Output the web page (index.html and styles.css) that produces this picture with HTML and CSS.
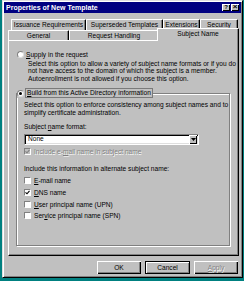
FILE: index.html
```html
<!DOCTYPE html>
<html>
<head>
<meta charset="utf-8">
<link rel="stylesheet" href="styles.css">
</head>
<body>
<div class="window">
  <div class="caption">
    <span class="caption-text">Properties of New Template</span>
    <span class="capbtns">
      <span class="capbtn">?</span>
      <span class="capbtn cx">×</span>
    </span>
  </div>
  <div class="tabs">
    <div class="tabrow back">
      <div class="tab w-iss">Issuance Requirements</div>
      <div class="tab w-sup">Superseded Templates</div>
      <div class="tab w-ext">Extensions</div>
      <div class="tab w-sec">Security</div>
    </div>
    <div class="tabrow front">
      <div class="tab w-gen">General</div>
      <div class="tab w-req">Request Handling</div>
      <div class="tab sel">Subject Name</div>
    </div>
  </div>
  <div class="panel">
    <div class="opt">
      <span class="radio"></span>
      <span class="lbl"><u>S</u>upply in the request</span>
    </div>
    <div class="desc">Select this option to allow a variety of subject name formats or if you do<br>not have access to the domain of which the subject is a member.<br>Autoenrollment is not allowed if you choose this option.</div>
    <div class="group">
      <div class="gtitle">
        <span class="radio"><span class="dot"></span></span>
        <span class="lbl focus"><u>B</u>uild from this Active Directory information</span>
      </div>
      <div class="gtext">Select this option to enforce consistency among subject names and to<br>simplify certificate administration.</div>
      <div class="flabel">Subject <u>n</u>ame format:</div>
      <div class="select">
        <span class="sval">None</span>
        <span class="dd"><svg width="5" height="3" viewBox="0 0 5 3"><path d="M0 0H5L2.5 3Z" fill="#000"/></svg></span>
      </div>
      <div class="chk dis">
        <span class="box"><svg width="5" height="5" viewBox="0 0 5 5"><path d="M0.5 2.3L2 3.8L4.5 0.8" fill="none" stroke="#808080" stroke-width="1.1"/></svg></span>
        <span class="lbl">Include e-<u>m</u>ail name in subject name</span>
      </div>
      <div class="flabel alt">Include this information in alternate subject name:</div>
      <div class="list">
        <div class="chk"><span class="box"></span><span class="lbl"><u>E</u>-mail name</span></div>
        <div class="chk"><span class="box"><svg width="5" height="5" viewBox="0 0 5 5"><path d="M0.5 2.3L2 3.8L4.5 0.8" fill="none" stroke="#000" stroke-width="1.1"/></svg></span><span class="lbl"><u>D</u>NS name</span></div>
        <div class="chk"><span class="box"></span><span class="lbl"><u>U</u>ser principal name (UPN)</span></div>
        <div class="chk"><span class="box"></span><span class="lbl">Ser<u>v</u>ice principal name (SPN)</span></div>
      </div>
    </div>
  </div>
  <div class="buttons">
    <div class="btn w-ok">OK</div>
    <div class="btn w-cancel def">Cancel</div>
    <div class="btn w-apply dis"><span><u>A</u>pply</span></div>
  </div>
</div>
</body>
</html>
```

FILE: styles.css
```css
* { box-sizing: border-box; }
html, body { margin: 0; padding: 0; }
body {
  background: #008080;
  width: 244px;
  height: 281px;
  overflow: hidden;
  font-family: "Liberation Sans", Arial, sans-serif;
  font-size: 6.6px;
  color: #000;
}
u { text-decoration: underline; text-underline-offset: 0.8px; text-decoration-thickness: 0.6px; }
.window {
  margin-left: 2px;
  width: 241px;
  height: 278px;
  background: #c0c0c0;
  border: 1px solid;
  border-color: #dfdfdf #000 #000 #dfdfdf;
  box-shadow: inset 1px 1px #fff, inset -1px -1px #808080;
  padding: 1px;
}
.caption {
  height: 11px;
  background: #000080;
  display: flex;
  align-items: center;
  justify-content: space-between;
  padding: 0 2px 0 2px;
}
.caption-text {
  color: #fff;
  font-weight: bold;
  font-size: 7px;
}
.capbtns { display: flex; gap: 1px; }
.capbtn {
  width: 8px;
  height: 7px;
  background: #c0c0c0;
  box-shadow: inset 1px 1px #fff, inset -1px -1px #000;
  font-size: 6px;
  font-weight: bold;
  line-height: 7px;
  text-align: center;
}
.capbtn.cx { font-size: 8px; line-height: 6.5px; }
.tabs { padding-top: 6px; }
.tabrow { display: flex; }
.tabrow.back { height: 11px; margin-left: 7px; }
.tabrow.front { height: 10px; margin-left: 4px; }
.tab {
  height: 100%;
  border-top: 1px solid #fff;
  border-left: 1px solid #fff;
  border-right: 1px solid #000;
  border-radius: 1px 1px 0 0;
  box-shadow: inset -1px 0 #808080;
  text-align: center;
  line-height: 9px;
  background: #c0c0c0;
  white-space: nowrap;
}
.w-iss { width: 75px; }
.w-sup { width: 77px; }
.w-ext { width: 37px; }
.w-sec { width: 38px; }
.w-gen { width: 61px; }
.w-req { width: 90px; }
.tab.sel {
  position: relative;
  z-index: 1;
  height: 13px;
  margin-top: -2px;
  margin-left: -2px;
  width: 82px;
  margin-bottom: -1px;
  line-height: 9px;
}
.panel {
  margin-left: 4px;
  width: 231px;
  height: 216px;
  border-top: 1px solid #fff;
  border-left: 1px solid #fff;
  border-right: 1px solid #000;
  border-bottom: 1px solid #000;
  box-shadow: inset -1px -1px #808080;
  padding: 9px 8px 0 8px;
}
.opt, .gtitle, .chk { display: flex; align-items: center; height: 8px; }
.radio {
  width: 7px;
  height: 7px;
  border-radius: 50%;
  background: #fff;
  border: 1px solid;
  border-color: #808080 #dfdfdf #dfdfdf #808080;
  display: flex;
  align-items: center;
  justify-content: center;
  flex: none;
}
.dot { width: 3px; height: 3px; border-radius: 50%; background: #000; }
.opt .lbl { margin-left: 2px; }
.desc {
  margin-left: 11px;
  margin-top: 1.6px;
  line-height: 7.75px;
  white-space: nowrap;
}
.group {
  margin-top: 10px;
  margin-left: -1px;
  width: 214px;
  height: 153px;
  border: 1px solid #808080;
  box-shadow: inset 1px 1px #fff, 1px 1px #fff;
  padding: 0 0 0 7px;
}
.gtitle {
  margin-top: -5px;
  margin-left: -7px;
  height: 9px;
  width: fit-content;
  background: #c0c0c0;
  padding-right: 1px;
}
.gtitle .lbl {
  margin-left: 2px;
  outline: 1px solid #7a7a7a;
  padding: 0 1px;
  line-height: 8px;
}
.gtext { margin-top: 3px; line-height: 8px; white-space: nowrap; }
.flabel { margin-top: 6px; line-height: 8px; }
.select {
  margin-top: 3px;
  width: 175px;
  height: 11px;
  background: #fff;
  border: 1px solid;
  border-color: #808080 #fff #fff #808080;
  box-shadow: inset 1px 1px #000, inset -1px -1px #dfdfdf;
  display: flex;
  align-items: center;
  justify-content: space-between;
  padding: 1px;
}
.sval { padding-left: 2px; line-height: 8px; }
.dd {
  width: 8px;
  height: 9px;
  background: #c0c0c0;
  box-shadow: inset 1px 1px #fff, inset -1px -1px #000;
  display: flex;
  align-items: center;
  justify-content: center;
}
.chk { margin-top: 3px; }
.box {
  width: 7px;
  height: 7px;
  background: #fff;
  border: 1px solid;
  border-color: #808080 #fff #fff #808080;
  display: flex;
  align-items: center;
  justify-content: center;
  flex: none;
}
.chk .lbl { margin-left: 3px; }
.chk.dis .box { background: #c0c0c0; }
.chk.dis .lbl, .btn.dis span { color: #808080; text-shadow: 0.6px 0.6px #fff; }
.flabel.alt { margin-top: 9px; }
.list { display: flex; flex-direction: column; gap: 3.67px; margin-top: 4px; }
.list .chk { margin-top: 0; }
.buttons {
  margin-top: 5px;
  display: flex;
  justify-content: flex-end;
  gap: 4px;
  padding-right: 3px;
}
.btn {
  height: 13px;
  background: #c0c0c0;
  box-shadow: inset 1px 1px #fff, inset -1px -1px #000, inset -2px -2px #808080;
  display: flex;
  align-items: center;
  justify-content: center;
}
.btn.def { box-shadow: inset 0 0 0 1px #000, inset 2px 2px #fff, inset -2px -2px #808080; }
.w-ok { width: 44px; }
.w-cancel { width: 45px; }
.w-apply { width: 44px; }
```
